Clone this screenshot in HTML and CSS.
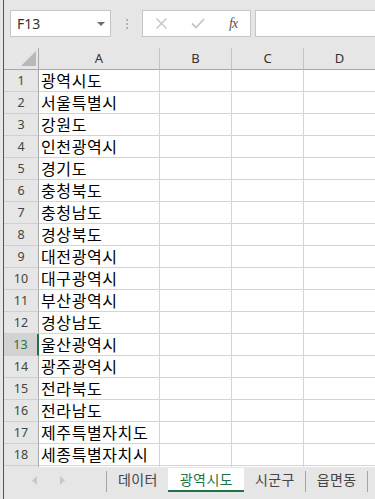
FILE: index.html
```html
<!DOCTYPE html>
<html lang="ko">
<head>
    <meta charset="UTF-8">
    <title>광역시도</title>
    <link rel="stylesheet" href="styles.css">
</head>
<body>
<div class="app">
    <div class="edge"></div>
    <div class="main">
        <div class="formula-bar">
            <div class="name-box">
                <span class="ref">F13</span>
                <svg class="drop" width="8" height="4" viewBox="0 0 8 4"><path d="M0 0H8L4 4Z" fill="#6f6f6f"/></svg>
            </div>
            <div class="grip"><i></i><i></i><i></i></div>
            <div class="fx-buttons">
                <svg class="btn" width="13" height="13" viewBox="0 0 13 13">
                    <path d="M1.5 1.5L11.5 11.5M11.5 1.5L1.5 11.5" stroke="#c4c4c4" stroke-width="1.4" fill="none"/>
                </svg>
                <svg class="btn" width="14" height="11" viewBox="0 0 14 11">
                    <path d="M1 5.5L5 9.5L13 1" stroke="#c4c4c4" stroke-width="1.8" fill="none"/>
                </svg>
                <span class="fx">fx</span>
            </div>
            <div class="fx-input"></div>
        </div>

        <div class="sheet">
            <div class="rh corner">
                <svg width="15" height="15" viewBox="0 0 15 15"><path d="M15 0V15H0Z" fill="#b8b8b8"/></svg>
            </div>
            <div class="ch">A</div>
            <div class="ch">B</div>
            <div class="ch">C</div>
            <div class="ch">D</div>

            <div class="rh">1</div><div class="c">광역시도</div><div class="c"></div><div class="c"></div><div class="c"></div>
            <div class="rh">2</div><div class="c">서울특별시</div><div class="c"></div><div class="c"></div><div class="c"></div>
            <div class="rh">3</div><div class="c">강원도</div><div class="c"></div><div class="c"></div><div class="c"></div>
            <div class="rh">4</div><div class="c">인천광역시</div><div class="c"></div><div class="c"></div><div class="c"></div>
            <div class="rh">5</div><div class="c">경기도</div><div class="c"></div><div class="c"></div><div class="c"></div>
            <div class="rh">6</div><div class="c">충청북도</div><div class="c"></div><div class="c"></div><div class="c"></div>
            <div class="rh">7</div><div class="c">충청남도</div><div class="c"></div><div class="c"></div><div class="c"></div>
            <div class="rh">8</div><div class="c">경상북도</div><div class="c"></div><div class="c"></div><div class="c"></div>
            <div class="rh">9</div><div class="c">대전광역시</div><div class="c"></div><div class="c"></div><div class="c"></div>
            <div class="rh">10</div><div class="c">대구광역시</div><div class="c"></div><div class="c"></div><div class="c"></div>
            <div class="rh">11</div><div class="c">부산광역시</div><div class="c"></div><div class="c"></div><div class="c"></div>
            <div class="rh">12</div><div class="c">경상남도</div><div class="c"></div><div class="c"></div><div class="c"></div>
            <div class="rh sel">13</div><div class="c">울산광역시</div><div class="c"></div><div class="c"></div><div class="c"></div>
            <div class="rh">14</div><div class="c">광주광역시</div><div class="c"></div><div class="c"></div><div class="c"></div>
            <div class="rh">15</div><div class="c">전라북도</div><div class="c"></div><div class="c"></div><div class="c"></div>
            <div class="rh">16</div><div class="c">전라남도</div><div class="c"></div><div class="c"></div><div class="c"></div>
            <div class="rh">17</div><div class="c">제주특별자치도</div><div class="c"></div><div class="c"></div><div class="c"></div>
            <div class="rh">18</div><div class="c">세종특별자치시</div><div class="c"></div><div class="c"></div><div class="c"></div>
            <div class="rh"></div><div class="c"></div><div class="c"></div><div class="c"></div><div class="c"></div>
        </div>

        <div class="tabs">
            <div class="nav">
                <svg width="5" height="9" viewBox="0 0 5 9"><path d="M5 0V9L0 4.5Z" fill="#c8c8c8"/></svg>
                <svg width="5" height="9" viewBox="0 0 5 9"><path d="M0 0V9L5 4.5Z" fill="#c8c8c8"/></svg>
            </div>
            <span class="sep"></span>
            <div class="tab">데이터</div>
            <div class="tab active">광역시도</div>
            <div class="tab">시군구</div>
            <span class="sep"></span>
            <div class="tab">읍면동</div>
            <span class="sep"></span>
        </div>
    </div>
</div>
</body>
</html>
```

FILE: styles.css
```css
body {
    margin: 0;
    width: 375px;
    height: 499px;
    overflow: hidden;
    background: #e6e6e6;
    font-family: "Noto Sans", "Noto Sans CJK KR", sans-serif;
    color: #333;
}

.app {
    display: flex;
    height: 499px;
}

.edge {
    width: 3px;
    flex: none;
}

.main {
    flex: 1;
    min-width: 0;
    border-left: 1px solid #217346;
    display: flex;
    flex-direction: column;
}

/* formula bar */

.formula-bar {
    height: 48px;
    box-sizing: border-box;
    padding-top: 10px;
    display: flex;
    align-items: flex-start;
    flex: none;
}

.name-box,
.fx-buttons,
.fx-input {
    height: 27px;
    box-sizing: border-box;
    border: 1px solid #c6c6c6;
    background: #fff;
    display: flex;
    align-items: center;
}

.name-box {
    margin-left: 6px;
    width: 101px;
    padding: 0 5px 0 6px;
    justify-content: space-between;
}

.ref {
    font-size: 14px;
    color: #333;
}

.drop {
    margin-top: 1px;
}

.grip {
    margin: 9px 0 0 15px;
    width: 2px;
    display: flex;
    flex-direction: column;
    gap: 2px;
}

.grip i {
    display: block;
    width: 2px;
    height: 2px;
    background: #b4b4b4;
}

.fx-buttons {
    margin-left: 14px;
    width: 109px;
    padding-left: 12px;
}

.fx-buttons .btn:nth-child(2) {
    margin-left: 23px;
}

.fx {
    margin-left: 24px;
    font-family: "Liberation Serif", serif;
    font-style: italic;
    font-size: 14px;
    color: #555;
    letter-spacing: -1px;
}

.fx-input {
    margin-left: 4px;
    flex: 1;
    margin-right: -6px;
}

/* sheet grid */

.sheet {
    flex: 1;
    min-height: 0;
    overflow: hidden;
    background: #fff;
    display: grid;
    grid-template-columns: 35px 121px 72px 72px 72px;
    grid-auto-rows: 22px;
}

.sheet > div {
    box-sizing: border-box;
}

.ch {
    background: #e6e6e6;
    border-right: 1px solid #c4c4c4;
    border-bottom: 1px solid #a8a8a8;
    font-size: 13px;
    line-height: 21px;
    text-align: center;
    color: #333;
}

.rh {
    background: #e6e6e6;
    border-right: 1px solid #a8a8a8;
    border-bottom: 1px solid #d0d0d0;
    font-size: 12.5px;
    line-height: 21px;
    text-align: center;
    color: #444;
}

.rh.corner {
    border-bottom-color: #a8a8a8;
    display: flex;
    justify-content: flex-end;
    align-items: flex-end;
    padding: 0 2px 3px 0;
}

.rh.sel {
    background: #d2d2d2;
    color: #217346;
    border-right: 2px solid #217346;
}

.c {
    border-right: 1px solid #d4d4d4;
    border-bottom: 1px solid #d4d4d4;
    padding-left: 2px;
    font-family: "Noto Sans CJK KR", sans-serif;
    font-size: 16px;
    letter-spacing: 0.6px;
    line-height: 21px;
    color: #000;
    white-space: nowrap;
}

/* sheet tabs */

.tabs {
    height: 32px;
    flex: none;
    display: flex;
    align-items: flex-start;
    background: #e6e6e6;
}

.nav {
    width: 102px;
    height: 24px;
    padding-left: 28px;
    box-sizing: border-box;
    display: flex;
    align-items: center;
    gap: 23px;
    margin-top: 1px;
}

.sep {
    width: 1px;
    height: 21px;
    margin-top: 4px;
    background: #a4a4a4;
}

.tab {
    height: 24px;
    margin-top: 1px;
    box-sizing: border-box;
    padding: 0 10px 0 11px;
    font-family: "Noto Sans CJK KR", sans-serif;
    font-size: 14px;
    letter-spacing: 0.4px;
    line-height: 23px;
    color: #444;
}

.tab.active {
    background: #fff;
    color: #217346;
    border-bottom: 2px solid #217346;
    line-height: 22px;
    padding: 0 11px 0 12px;
}
```
